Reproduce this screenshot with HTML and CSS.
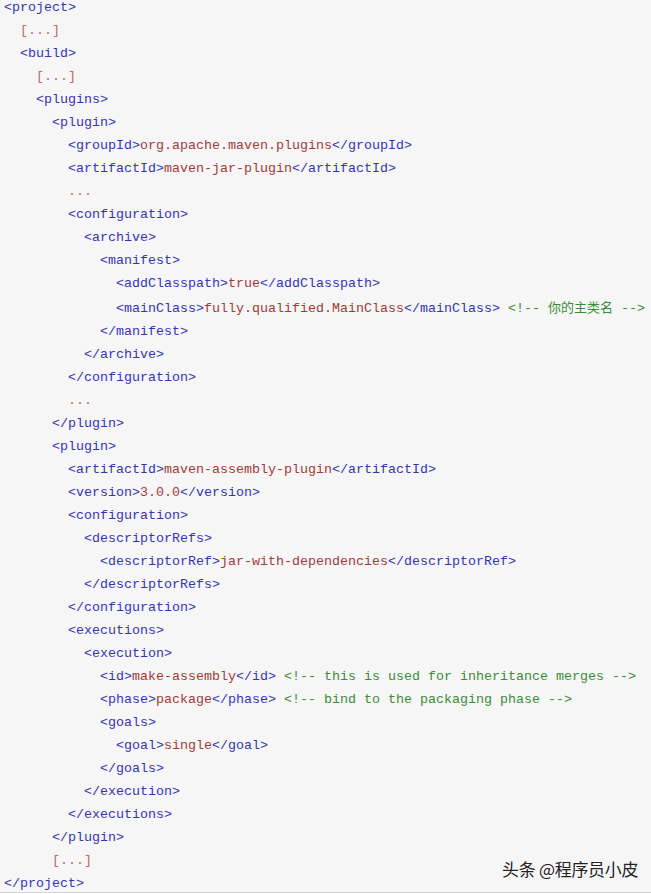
FILE: index.html
```html
<!DOCTYPE html>
<html>
<head>
<meta charset="utf-8">
<link rel="stylesheet" href="styles.css">
</head>
<body>
<div class="frame">
<pre class="code"><span class="t">&lt;project&gt;</span>
  <span class="e">[...]</span>
  <span class="t">&lt;build&gt;</span>
    <span class="e">[...]</span>
    <span class="t">&lt;plugins&gt;</span>
      <span class="t">&lt;plugin&gt;</span>
        <span class="t">&lt;groupId&gt;</span><span class="v">org.apache.maven.plugins</span><span class="t">&lt;/groupId&gt;</span>
        <span class="t">&lt;artifactId&gt;</span><span class="v">maven-jar-plugin</span><span class="t">&lt;/artifactId&gt;</span>
        <span class="e">...</span>
        <span class="t">&lt;configuration&gt;</span>
          <span class="t">&lt;archive&gt;</span>
            <span class="t">&lt;manifest&gt;</span>
              <span class="t">&lt;addClasspath&gt;</span><span class="v">true</span><span class="t">&lt;/addClasspath&gt;</span>
              <span class="t">&lt;mainClass&gt;</span><span class="v">fully.qualified.MainClass</span><span class="t">&lt;/mainClass&gt;</span> <span class="c">&lt;!-- <span class="cjk">你的主类名</span> --&gt;</span>
            <span class="t">&lt;/manifest&gt;</span>
          <span class="t">&lt;/archive&gt;</span>
        <span class="t">&lt;/configuration&gt;</span>
        <span class="e">...</span>
      <span class="t">&lt;/plugin&gt;</span>
      <span class="t">&lt;plugin&gt;</span>
        <span class="t">&lt;artifactId&gt;</span><span class="v">maven-assembly-plugin</span><span class="t">&lt;/artifactId&gt;</span>
        <span class="t">&lt;version&gt;</span><span class="v">3.0.0</span><span class="t">&lt;/version&gt;</span>
        <span class="t">&lt;configuration&gt;</span>
          <span class="t">&lt;descriptorRefs&gt;</span>
            <span class="t">&lt;descriptorRef&gt;</span><span class="v">jar-with-dependencies</span><span class="t">&lt;/descriptorRef&gt;</span>
          <span class="t">&lt;/descriptorRefs&gt;</span>
        <span class="t">&lt;/configuration&gt;</span>
        <span class="t">&lt;executions&gt;</span>
          <span class="t">&lt;execution&gt;</span>
            <span class="t">&lt;id&gt;</span><span class="v">make-assembly</span><span class="t">&lt;/id&gt;</span> <span class="c">&lt;!-- this is used for inheritance merges --&gt;</span>
            <span class="t">&lt;phase&gt;</span><span class="v">package</span><span class="t">&lt;/phase&gt;</span> <span class="c">&lt;!-- bind to the packaging phase --&gt;</span>
            <span class="t">&lt;goals&gt;</span>
              <span class="t">&lt;goal&gt;</span><span class="v">single</span><span class="t">&lt;/goal&gt;</span>
            <span class="t">&lt;/goals&gt;</span>
          <span class="t">&lt;/execution&gt;</span>
        <span class="t">&lt;/executions&gt;</span>
      <span class="t">&lt;/plugin&gt;</span>
      <span class="e">[...]</span>
<span class="t">&lt;/project&gt;</span></pre>
<div class="watermark">头条 @程序员小皮</div>
</div>
</body>
</html>
```
FILE: styles.css
```css
html, body {
  margin: 0;
  padding: 0;
  background: #ffffff;
}
.frame {
  position: relative;
  width: 651px;
  height: 892px;
  background: #f6f6f6;
  border-bottom: 1px solid #d8d8d8;
  overflow: hidden;
}
.code {
  margin: 0;
  padding: 0 0 0 4px;
  margin-top: -4px;
  font-family: "Liberation Mono", "Noto Sans CJK SC", monospace;
  font-size: 13.333px;
  line-height: 23px;
  color: #333;
  white-space: pre;
}
.t { color: #3434b8; }
.v { color: #a33a36; }
.e { color: #b86a66; }
.c { color: #3a8c3a; }
.cjk { font-family: "Noto Sans CJK SC", sans-serif; font-size: 13px; }
.watermark {
  position: absolute;
  left: 502px;
  top: 857px;
  font-family: "Noto Sans CJK SC", sans-serif;
  font-size: 17px;
  line-height: 24px;
  letter-spacing: -0.3px;
  color: #222;
  text-shadow: 0 0 2px #fff;
}
```
